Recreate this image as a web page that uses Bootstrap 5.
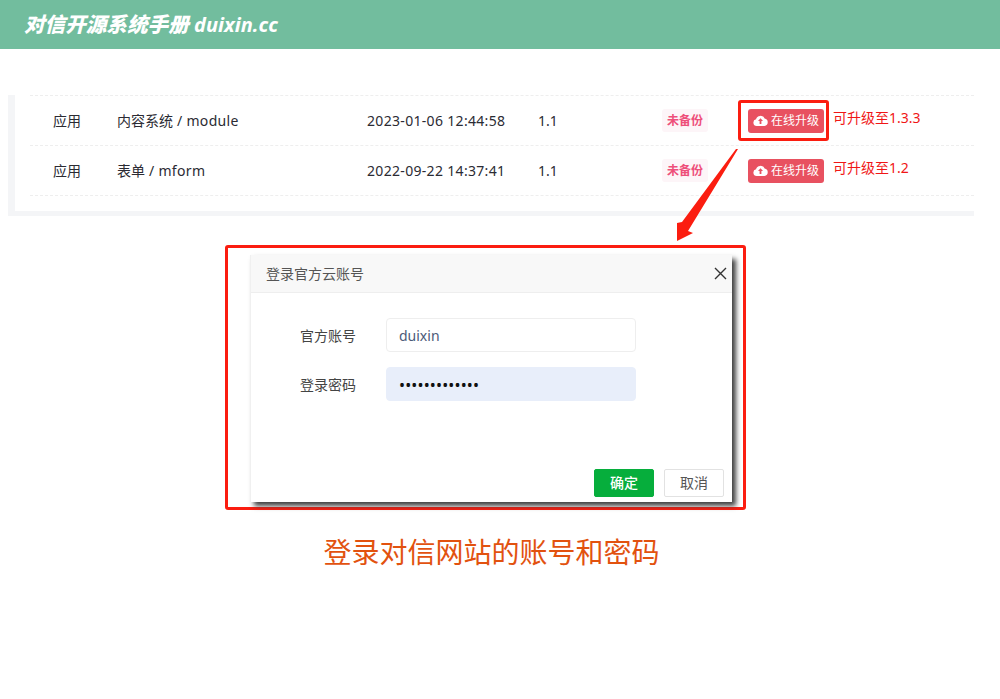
<!DOCTYPE html>
<html lang="zh"><head><meta charset="utf-8"><title>对信开源系统手册</title>
<link href="https://cdn.jsdelivr.net/npm/bootstrap@5.3.0/dist/css/bootstrap.min.css" rel="stylesheet">
<style>
html,body{height:699px;overflow:hidden}
body{background:#fff;font-family:"Noto Sans","Noto Sans CJK SC",sans-serif;color:#333;font-size:14px;position:relative}
.topbar{height:49px;background:#72bd9e;padding-left:24px;color:#fff;font:italic 900 20.6px/49px "Noto Sans","Noto Sans CJK SC",sans-serif}
.topbar-lat{font-weight:700;font-size:20px}
.panel{margin:46px 26px 0 8px;height:121px;background:#f4f5f7;padding:0 0 5px 7px}
.panel-inner{background:#fff;height:116px;padding:0 0 0 15px}
.trow{height:50px;border-top:1px dashed #eee;color:#2b2b33;font-size:14px}
.trow:last-child{height:51px;border-bottom:1px dashed #eee}
.c-type{width:87px;padding-left:23px}.c-name{width:250px}.c-date{width:171px}.c-ver{width:124px}
.c-bak{width:86px}
.lat{letter-spacing:.32px}
.bak{display:inline-block;background:#fdf5f8;color:#ee4f7a;font-size:12px;font-weight:700;padding:2px 5px;border-radius:3px;line-height:19px}
.up{background:#e85160;color:#fff;font-size:12px;height:24px;width:76px;border-radius:3px;line-height:24px;gap:3px}
.up-note{color:#f01616;font-size:14px;margin-left:9px;margin-top:-6px}
.redbox{position:absolute;border:3px solid #fb1d10;border-radius:3px}
.dlg{position:absolute;left:250px;top:255px;width:482px;height:247px;background:#fff;box-shadow:4px 4px 5px #3f3f3f;border:1px solid #f0f0f0;border-width:0 0 0 1px}
.dlg-head{height:38px;background:#f8f8f8;border-bottom:1px solid #eee;padding:0 5px 0 15px;color:#555;font-size:14px}
.dlg-field{color:#444;font-size:14px}
.dlg-label{width:105px;text-align:right}
.dlg-input{margin-left:30px;width:250px;height:34px;border:1px solid #eee;border-radius:4px;padding:1px 12px 0;font-size:14px;color:#4c5a78;line-height:32px}
.dlg-input.filled{background:#e8eefa;border-color:#e8eefa;color:#111;font-size:16px;letter-spacing:.15px}
.dlg-foot{position:absolute;right:8px;bottom:5px;gap:10px}
.bt{width:60px;height:28px;border-radius:2px;font-size:14px;line-height:26px;text-align:center;border:1px solid #e2e2e2;color:#555}
.bt.ok{background:#06ae3c;border-color:#06ae3c;color:#fff;font-weight:500}
.caption{position:absolute;left:0;width:983px;top:533px;text-align:center;color:#e2520f;font-size:28px;line-height:38px}
.arrow{position:absolute;left:670px;top:145px}
</style></head><body>
<div class="topbar">对信开源系统手册 <span class="topbar-lat">duixin.cc</span></div>
<div class="panel"><div class="panel-inner">
<div class="trow d-flex align-items-center"><div class="c-type">应用</div><div class="c-name">内容系统<span class="lat"> / module</span></div><div class="c-date lat">2023-01-06 12:44:58</div><div class="c-ver">1.1</div><div class="c-bak"><span class="bak">未备份</span></div>
<div class="up d-flex align-items-center justify-content-center"><svg width="15" height="11" viewBox="0 0 15 11"><path fill="#fff" d="M3.6 11A3.4 3.4 0 0 1 3 4.3 4.6 4.6 0 0 1 11.6 3.5 3.8 3.8 0 0 1 11.5 11Z"/><path fill="#e85160" d="M7.5 3.2 10 6H8.4V9H6.6V6H5Z"/></svg><span>在线升级</span></div><div class="up-note">可升级至1.3.3</div></div>
<div class="trow d-flex align-items-center"><div class="c-type">应用</div><div class="c-name">表单<span class="lat"> / mform</span></div><div class="c-date lat">2022-09-22 14:37:41</div><div class="c-ver">1.1</div><div class="c-bak"><span class="bak">未备份</span></div>
<div class="up d-flex align-items-center justify-content-center"><svg width="15" height="11" viewBox="0 0 15 11"><path fill="#fff" d="M3.6 11A3.4 3.4 0 0 1 3 4.3 4.6 4.6 0 0 1 11.6 3.5 3.8 3.8 0 0 1 11.5 11Z"/><path fill="#e85160" d="M7.5 3.2 10 6H8.4V9H6.6V6H5Z"/></svg><span>在线升级</span></div><div class="up-note">可升级至1.2</div></div>
</div></div>
<div class="redbox" style="left:738px;top:100px;width:91px;height:41px"></div>
<svg class="arrow" width="72" height="100" viewBox="0 0 72 100"><polygon fill="#fb1d10" points="68,4 66,4 12,77 7,78 7,96 23,88 18,86"/></svg>
<div class="redbox" style="left:225px;top:245px;width:521px;height:265px"></div>
<div class="dlg">
<div class="dlg-head d-flex align-items-center justify-content-between"><span>登录官方云账号</span><svg width="13" height="13" viewBox="0 0 13 13"><path d="M1 1 12 12M12 1 1 12" stroke="#333" stroke-width="1.4" fill="none"/></svg></div>
<div class="dlg-field d-flex align-items-center" style="margin-top:25px"><div class="dlg-label">官方账号</div><div class="dlg-input">duixin</div></div>
<div class="dlg-field d-flex align-items-center" style="margin-top:15px"><div class="dlg-label">登录密码</div><div class="dlg-input filled">•••••••••••••</div></div>
<div class="dlg-foot d-flex"><div class="bt ok">确定</div><div class="bt">取消</div></div>
</div>
<div class="caption">登录对信网站的账号和密码</div>
<script src="https://cdn.jsdelivr.net/npm/bootstrap@5.3.0/dist/js/bootstrap.bundle.min.js"></script>
</body></html>
